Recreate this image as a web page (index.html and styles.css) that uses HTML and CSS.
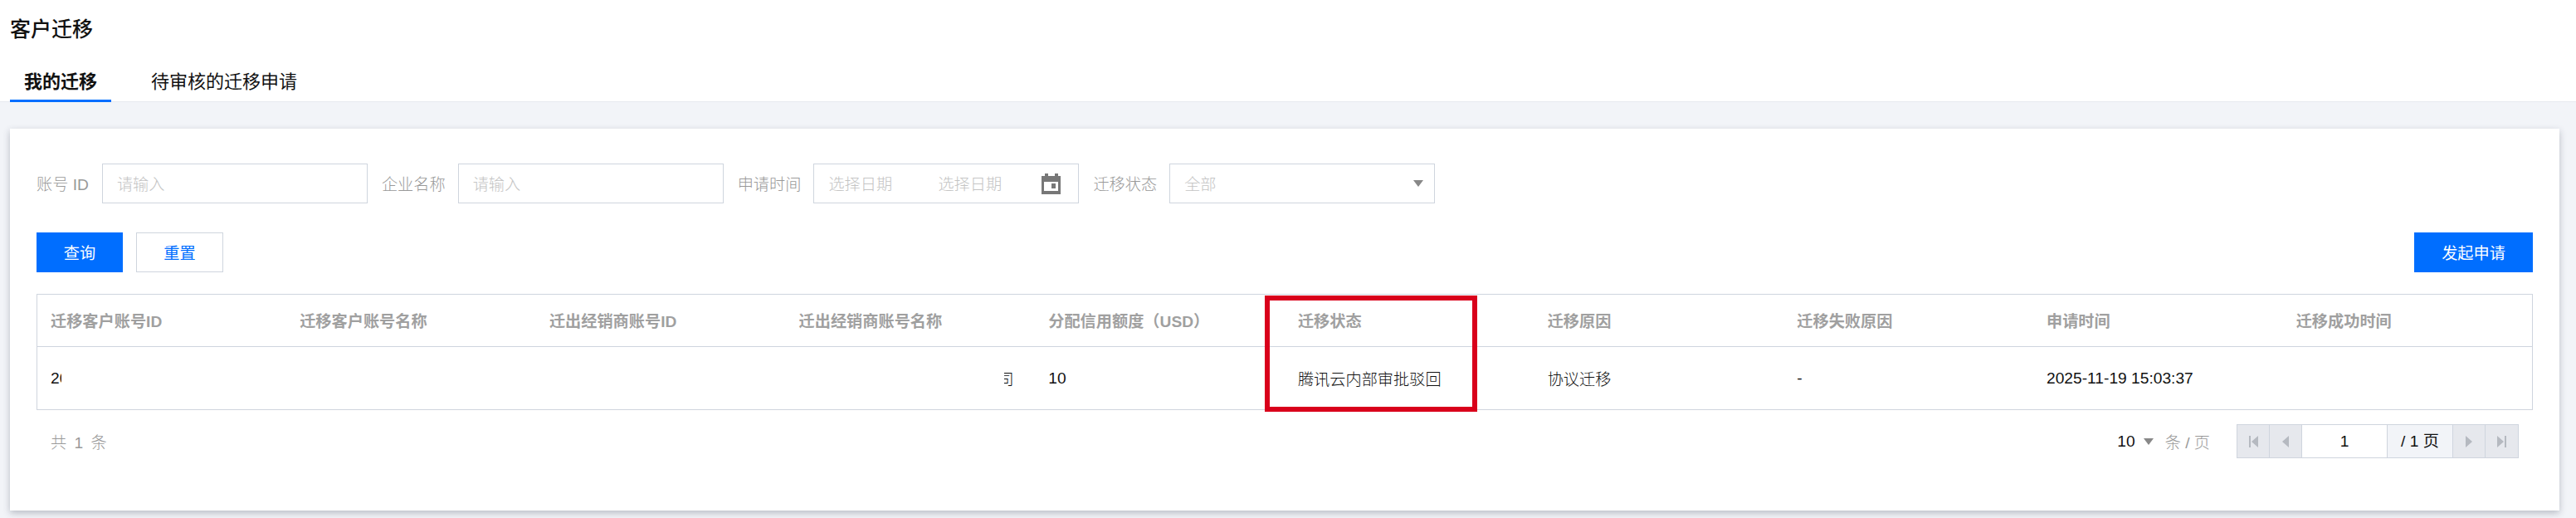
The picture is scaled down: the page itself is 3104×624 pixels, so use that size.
FILE: index.html
```html
<!DOCTYPE html>
<html lang="zh-CN">
  <head>
    <meta charset="UTF-8" />
    <title>客户迁移</title>
    <link rel="stylesheet" href="styles.css">
  </head>
  <body>
    <div class="head">
      <h2 class="title">客户迁移</h2>
      <div class="tabs">
        <a class="tab active">我的迁移</a>
        <a class="tab">待审核的迁移申请</a>
      </div>
    </div>
    <div class="main">
      <div class="card">
        <div class="filters">
          <label class="label label-id">账号 ID</label>
          <div class="field"><span class="holder">请输入</span></div>
          <label class="label">企业名称</label>
          <div class="field"><span class="holder">请输入</span></div>
          <label class="label">申请时间</label>
          <div class="field date">
            <span class="holder">选择日期</span>
            <span class="holder">选择日期</span>
            <svg class="cal-icon" width="23" height="25" viewBox="0 0 23 25">
              <path fill="#777" d="M4 0h4v3h8V0h4v3h3v22H0V3h4z" />
              <rect fill="#fff" x="3" y="10" width="17" height="11" />
              <rect fill="#777" x="12" y="12" width="5" height="6" />
            </svg>
          </div>
          <label class="label">迁移状态</label>
          <div class="field select">
            <span class="holder">全部</span>
            <i class="arrow"></i>
          </div>
        </div>
        <div class="actions">
          <button class="btn primary">查询</button>
          <button class="btn plain">重置</button>
          <button class="btn primary apply">发起申请</button>
        </div>
        <div class="table-wrap">
          <table class="table">
            <thead>
              <tr>
                <th>迁移客户账号ID</th>
                <th>迁移客户账号名称</th>
                <th>迁出经销商账号ID</th>
                <th>迁出经销商账号名称</th>
                <th>分配信用额度（USD）</th>
                <th>迁移状态</th>
                <th>迁移原因</th>
                <th>迁移失败原因</th>
                <th>申请时间</th>
                <th>迁移成功时间</th>
              </tr>
            </thead>
            <tbody>
              <tr>
                <td><span class="cut-start">20</span></td>
                <td></td>
                <td></td>
                <td><span class="cut-end"><span>司</span></span></td>
                <td>10</td>
                <td>腾讯云内部审批驳回</td>
                <td>协议迁移</td>
                <td>-</td>
                <td>2025-11-19 15:03:37</td>
                <td></td>
              </tr>
            </tbody>
          </table>
          <div class="mark"></div>
        </div>
        <div class="foot">
          <span class="total">共 1 条</span>
          <div class="size">
            <span class="size-num">10</span>
            <i class="arrow"></i>
            <span class="size-unit">条 / 页</span>
          </div>
          <div class="pager">
            <span class="cell">
              <svg width="11" height="14" viewBox="0 0 11 14"><path fill="#b5b9c0" d="M0 0h2v14H0zM11 0v14L3 7z" /></svg>
            </span>
            <span class="cell">
              <svg width="8" height="14" viewBox="0 0 8 14"><path fill="#b5b9c0" d="M8 0v14L0 7z" /></svg>
            </span>
            <span class="page-input">1</span>
            <span class="page-all">/ 1 页</span>
            <span class="cell">
              <svg width="8" height="14" viewBox="0 0 8 14"><path fill="#b5b9c0" d="M0 0v14l8-7z" /></svg>
            </span>
            <span class="cell">
              <svg width="11" height="14" viewBox="0 0 11 14"><path fill="#b5b9c0" d="M9 0h2v14H9zM0 0v14l8-7z" /></svg>
            </span>
          </div>
        </div>
      </div>
    </div>
  </body>
</html>
```

FILE: styles.css
```css
* {
  margin: 0;
  padding: 0;
  box-sizing: border-box;
}
html, body {
  width: 3104px;
  height: 624px;
  overflow: hidden;
}
body {
  background-color: #f2f4f8;
  font-family: "Liberation Sans", "Noto Sans CJK SC", sans-serif;
  font-size: 19.2px;
  color: #111;
}
.head {
  height: 123px;
  background: #fff;
  padding: 20px 12px 0;
  border-bottom: 1px solid #e7eaef;
}
.title {
  font-size: 25px;
  line-height: 30px;
  font-weight: 500;
  color: #111;
}
.tabs {
  display: flex;
  margin-top: 28px;
}
.tab {
  width: 122px;
  height: 45px;
  line-height: 42px;
  font-size: 22px;
  text-align: center;
}
.tab + .tab {
  width: auto;
  margin-left: 48px;
}
.tab.active {
  font-weight: 700;
  border-bottom: 3px solid #006eff;
}
.main {
  padding: 32px 20px 0 12px;
}
.card {
  height: 460px;
  background: #fff;
  padding: 42px 32px 0;
  box-shadow: 0 3px 8px rgba(54, 58, 80, .3);
}
.filters {
  display: flex;
  align-items: center;
}
.label {
  color: #999;
  font-weight: 300;
  margin-left: 17px;
  margin-right: 15px;
  white-space: nowrap;
}
.label-id {
  margin-left: 0;
  margin-right: 16px;
}
.field {
  width: 320px;
  height: 48px;
  border: 1px solid #cfd5de;
  display: flex;
  align-items: center;
  padding-left: 17px;
}
.holder {
  color: #c4c4c4;
  font-weight: 300;
}
.date .holder {
  width: 132px;
}
.cal-icon {
  margin-left: -7px;
}
.select {
  justify-content: space-between;
  padding-right: 13px;
}
.arrow {
  display: block;
  width: 0;
  height: 0;
  border-left: 6px solid transparent;
  border-right: 6px solid transparent;
  border-top: 8px solid #888;
}
.actions {
  display: flex;
  margin-top: 35px;
  gap: 16px;
}
.btn {
  height: 48px;
  width: 104px;
  font: inherit;
  border: 1px solid #006eff;
}
.primary {
  background: #006eff;
  color: #fff;
}
.plain {
  width: 105px;
  background: #fff;
  color: #006eff;
  border-color: #cfd5de;
}
.apply {
  width: 143px;
  margin-left: auto;
}
.table-wrap {
  position: relative;
  margin-top: 26px;
}
.table {
  width: 100%;
  table-layout: fixed;
  border-collapse: collapse;
  border: 1px solid #cfd5de;
}
.table th {
  height: 63px;
  padding: 0 16px;
  text-align: left;
  font-weight: 700;
  color: #a0a0a0;
  white-space: nowrap;
  border-bottom: 1px solid #cfd5de;
}
.table td {
  height: 76px;
  padding: 0 16px;
  white-space: nowrap;
  font-weight: 300;
  color: #111;
}
.cut-start {
  display: block;
  width: 13px;
  overflow: hidden;
}
.cut-end {
  display: flex;
  justify-content: flex-end;
  width: 12px;
  margin-left: 247px;
  overflow: hidden;
}
.cut-end span {
  flex: none;
}
.mark {
  position: absolute;
  left: 1480px;
  top: 2px;
  width: 256px;
  height: 140px;
  border: 6px solid #d9001b;
}
.foot {
  display: flex;
  align-items: center;
  margin-top: 17px;
  padding: 0 17px;
}
.total {
  color: #999;
  font-weight: 300;
  word-spacing: 4px;
  margin-right: auto;
}
.size {
  display: flex;
  align-items: center;
}
.size-num {
  margin-right: 10px;
}
.size-unit {
  margin-left: 14px;
  color: #999;
  font-weight: 300;
  margin-right: 32px;
}
.pager {
  display: flex;
  height: 41px;
  border: 1px solid #cfd5de;
  line-height: 39px;
  text-align: center;
}
.cell {
  width: 39px;
  background: #e6e8ed;
  border-right: 1px solid #cfd5de;
  display: flex;
  align-items: center;
  justify-content: center;
}
.cell:last-child {
  border-right: none;
}
.page-input {
  width: 103px;
  border-right: 1px solid #cfd5de;
}
.page-all {
  width: 79px;
  background: #f2f4f8;
  border-right: 1px solid #cfd5de;
}
```
